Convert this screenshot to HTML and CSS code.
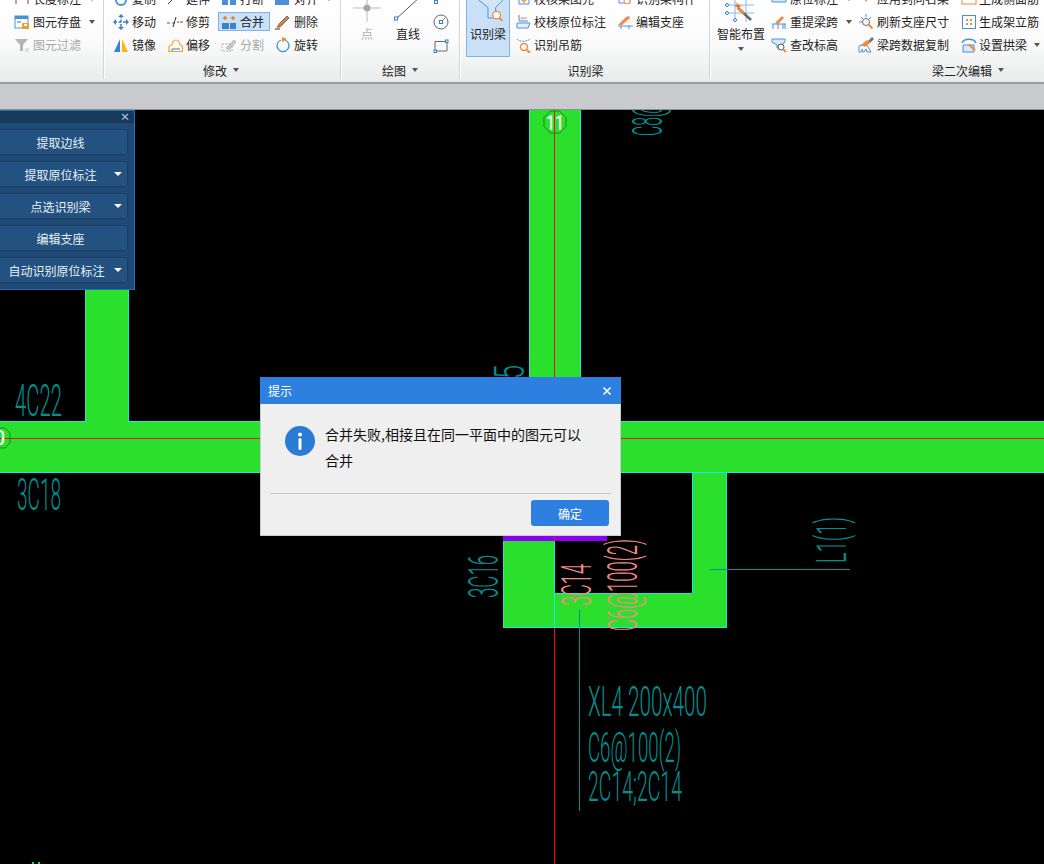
FILE: index.html
```html
<!DOCTYPE html>
<html lang="zh-CN">
<head>
<meta charset="utf-8">
<title>识别梁</title>
<link rel="stylesheet" href="styles.css">
</head>
<body>
<div class="app">
  <header class="ribbon">
    <section class="group g1">
      <div class="body">
        <div class="col">
          <div class="item"><svg class="ic" viewBox="0 0 16 16"><path d="M2 3v10M14 3v10M2 8h12" fill="none" stroke="#555"/></svg><span>长度标注</span><i class="caret"></i></div>
          <div class="item"><svg class="ic" viewBox="0 0 16 16"><rect x="1" y="2" width="13" height="12" fill="#fff" stroke="#4a90d9"/><rect x="1" y="2" width="13" height="3" fill="#4a90d9"/><rect x="3" y="7" width="4" height="2" fill="#8ab8e8"/><rect x="8" y="9" width="7" height="6" fill="#f39a3a"/><rect x="10" y="10" width="3" height="2" fill="#fff"/></svg><span>图元存盘</span><i class="caret"></i></div>
          <div class="item off"><svg class="ic" viewBox="0 0 16 16"><path d="M1 2h13L9 8v6H6V8z" fill="#b5b5b5"/><path d="M11 12h4M11 14h4" stroke="#c8c8c8"/></svg><span>图元过滤</span></div>
        </div>
      </div>
      <footer class="label"></footer>
    </section>

    <section class="group g2">
      <div class="body">
        <div class="col w54">
          <div class="item"><svg class="ic" viewBox="0 0 16 16"><circle cx="8" cy="9" r="5" fill="none" stroke="#4a90d9" stroke-width="2"/></svg><span>复制</span></div>
          <div class="item"><svg class="ic" viewBox="0 0 16 16"><path d="M8 1v14M1 8h14" stroke="#3b82cc" stroke-width="1.5" stroke-dasharray="3 1.500"/><path d="M8 0l3 3H5zM8 16l3-3H5zM0 8l3-3v6zM16 8l-3-3v6z" fill="#3b82cc"/></svg><span>移动</span></div>
          <div class="item"><svg class="ic" viewBox="0 0 16 16"><path d="M7 2v13H1z" fill="#3b82cc"/><path d="M9 2v13h6z" fill="#fdb515"/></svg><span>镜像</span></div>
        </div>
        <div class="col w54">
          <div class="item"><svg class="ic" viewBox="0 0 16 16"><path d="M1 13l9-9" stroke="#444"/></svg><span>延伸</span></div>
          <div class="item"><svg class="ic" viewBox="0 0 16 16"><path d="M0 9h3M5 9h3M10 8h2M13 8h3" stroke="#555"/><path d="M6 13L9 3" stroke="#333"/></svg><span>修剪</span></div>
          <div class="item"><svg class="ic" viewBox="0 0 16 16"><path d="M1 14.500h15M2 14V10c0-1 1-2 3-2 0-3 2-5 4-5s4 2 4 5c2 0 2.500 1 2.500 2v4" fill="none" stroke="#eda52c" stroke-width="1.200"/><path d="M5 14v-2h8" fill="none" stroke="#3b82cc"/></svg><span>偏移</span></div>
        </div>
        <div class="col w54">
          <div class="item"><svg class="ic" viewBox="0 0 16 16"><rect x="1" y="4" width="6" height="10" fill="#4a90d9"/><rect x="9" y="4" width="6" height="10" fill="#4a90d9"/></svg><span>打断</span></div>
          <div class="item on"><svg class="ic" viewBox="0 0 16 16"><rect x="1" y="9" width="7" height="6" fill="#3b82cc"/><rect x="9" y="9" width="6" height="6" fill="#3b82cc"/><path d="M2 4h4M4 2v4M10 4h4M12 2v4" stroke="#e87a1d" stroke-width="1.300"/></svg><span>合并</span></div>
          <div class="item off"><svg class="ic" viewBox="0 0 16 16"><path d="M1 7h10v7H1z" fill="none" stroke="#b0b0b0" stroke-dasharray="2 1"/><path d="M5 11l8-8 2 2-7 8z" fill="#c8c8c8" stroke="#a5a5a5" stroke-width=".6"/></svg><span>分割</span></div>
        </div>
        <div class="col">
          <div class="item"><svg class="ic" viewBox="0 0 16 16"><rect x="0" y="3" width="14" height="11" fill="#4a90d9"/></svg><span>对齐</span><i class="caret"></i></div>
          <div class="item"><svg class="ic" viewBox="0 0 16 16"><path d="M4 10l8-8 2 2-8 8z" fill="#c98a4a" stroke="#444" stroke-width=".7"/><path d="M2 14c0-3 1-4 3-4l1 2c0 1-2 2-4 2z" fill="#e2622a"/><path d="M0 15h5" stroke="#333"/></svg><span>删除</span></div>
          <div class="item"><svg class="ic" viewBox="0 0 16 16"><path d="M6 3a6 6 0 1 0 4 0" fill="none" stroke="#4a90d9" stroke-width="1.300"/><path d="M7 0l5 2-5 3z" fill="#f08a24"/></svg><span>旋转</span></div>
        </div>
      </div>
      <footer class="label">修改<i class="caret"></i></footer>
    </section>

    <section class="group g3">
      <div class="body">
        <div class="large pt">
          <svg class="lg" viewBox="0 0 36 38"><path d="M4 21h28M18 7v28" stroke="#bbb"/><circle cx="18" cy="21" r="3.500" fill="#a8a8a8"/></svg>
          <span class="off-t">点</span>
        </div>
        <div class="large ln">
          <svg class="lg" viewBox="0 0 46 38"><path d="M11 32L35 10" stroke="#555"/><rect x="9.500" y="30" width="3" height="3" fill="#fff" stroke="#2f80d8"/></svg>
          <span>直线</span>
        </div>
        <div class="col">
          <div class="item"><svg class="ic" viewBox="0 0 16 16"><path d="M3 10c1-3 2-6 3-8" stroke="#555" fill="none"/><rect x="1.500" y="9.500" width="3" height="3" fill="#fff" stroke="#2f80d8"/></svg></div>
          <div class="item"><svg class="ic" viewBox="0 0 16 16"><circle cx="8" cy="8" r="7" fill="none" stroke="#666"/><path d="M8 8l4-4" stroke="#888"/><rect x="6.500" y="6.500" width="3" height="3" fill="#fff" stroke="#2f80d8"/></svg></div>
          <div class="item"><svg class="ic" viewBox="0 0 16 16"><path d="M2 4.500h12V14H2z" fill="none" stroke="#666"/><rect x="12.500" y="3" width="2.500" height="2.500" fill="#fff" stroke="#2f80d8"/><rect x="1" y="13" width="2.500" height="2.500" fill="#fff" stroke="#2f80d8"/></svg></div>
        </div>
      </div>
      <footer class="label">绘图<i class="caret"></i></footer>
    </section>

    <section class="group g4">
      <div class="body">
        <div class="large act">
          <svg class="lg" viewBox="0 0 44 38"><path d="M12 12l10 8v11h8V20l8-8" fill="#d3e4f5" stroke="#4a90d9"/><circle cx="31" cy="28" r="4" fill="#fff" stroke="#ee8a3a" stroke-width="1.300"/><path d="M34 31l3 3" stroke="#ee8a3a" stroke-width="2"/></svg>
          <span>识别梁</span>
        </div>
        <div class="col w101">
          <div class="item tight"><svg class="ic" viewBox="0 0 16 16"><path d="M3 3v10h10V8" fill="none" stroke="#4a90d9"/><path d="M5 8l3 3 5-7" fill="none" stroke="#ee8a3a" stroke-width="1.400"/></svg><span>校核梁图元</span></div>
          <div class="item tight"><svg class="ic" viewBox="0 0 16 16"><path d="M3 1v6h9M1 9h13l-2 5H1z" fill="#e7f0fa" stroke="#4a90d9"/><path d="M5 4h6" stroke="#ee8a3a"/></svg><span>校核原位标注</span></div>
          <div class="item tight"><svg class="ic" viewBox="0 0 16 16"><path d="M1 2c1 3 11 3 13 0" fill="none" stroke="#4a90d9" stroke-dasharray="2 1"/><circle cx="8" cy="10" r="3.500" fill="#fff" stroke="#ee8a3a" stroke-width="1.400"/><path d="M11 13l3 3" stroke="#ee8a3a" stroke-width="2"/></svg><span>识别吊筋</span></div>
        </div>
        <div class="col">
          <div class="item"><svg class="ic" viewBox="0 0 16 16"><path d="M2 3h11v9H2z" fill="none" stroke="#4a90d9"/><circle cx="10" cy="10" r="3" fill="#fff" stroke="#ee8a3a"/></svg><span>识别梁构件</span></div>
          <div class="item"><svg class="ic" viewBox="0 0 16 16"><path d="M1 11l8-8 3-1 1 2-8 7z" fill="#f08a4a"/><path d="M1 12h15M4 12v3M12 12v3" stroke="#4a90d9"/></svg><span>编辑支座</span></div>
          <div class="item"></div>
        </div>
      </div>
      <footer class="label lift">识别梁</footer>
    </section>

    <section class="group g5">
      <div class="body">
        <div class="large smart">
          <svg class="lg" viewBox="0 0 50 38"><path d="M10 18h28M10 26h28M19 10v25M30 10v25" stroke="#8ab8ea"/><circle cx="11" cy="18" r="1.500" fill="#fff" stroke="#2f80d8"/><circle cx="11" cy="26" r="1.500" fill="#fff" stroke="#2f80d8"/><circle cx="19" cy="33" r="1.500" fill="#fff" stroke="#2f80d8"/><path d="M22 21l13 12" stroke="#666" stroke-width="2.500"/><path d="M22 21l6 5.500" stroke="#ee8a3a" stroke-width="2.500"/><path d="M20 15l1 3-3 1 3 1 1 3 1-3 3-1-3-1z" fill="#ee6a2a"/></svg>
          <span>智能布置</span>
          <i class="caret solo"></i>
        </div>
        <div class="col w87">
          <div class="item"><svg class="ic" viewBox="0 0 16 16"><path d="M1 6l3-3h11v8H1z" fill="#dbe9f7" stroke="#4a90d9"/></svg><span>原位标注</span><i class="caret"></i></div>
          <div class="item"><svg class="ic" viewBox="0 0 16 16"><path d="M4 9l7-7 2 2-6 6z" fill="#ee8a3a"/><path d="M1 10h14M2 10v5M7 10v5M12 10v5M14 10v5" stroke="#4a90d9"/></svg><span>重提梁跨</span><i class="caret"></i></div>
          <div class="item"><svg class="ic" viewBox="0 0 16 16"><path d="M1 2h13v3l-4 3v3H6V8L1 5z" fill="#dbe9f7" stroke="#4a90d9"/><circle cx="10" cy="10" r="3" fill="#fff" stroke="#555"/><path d="M12 12l3 3" stroke="#ee8a3a" stroke-width="2"/></svg><span>查改标高</span></div>
        </div>
        <div class="col w103">
          <div class="item"><svg class="ic" viewBox="0 0 16 16"><path d="M3 2h10l-5 9z" fill="#ee8a3a"/></svg><span>应用到同名梁</span></div>
          <div class="item"><svg class="ic" viewBox="0 0 16 16"><path d="M8 0v3M1 8h3M3 3l2 2M13 3l-2 2" stroke="#4a90d9"/><circle cx="8" cy="8" r="3.500" fill="#fff" stroke="#667"/><path d="M10.500 10.500l4 4" stroke="#ee8a3a" stroke-width="2"/></svg><span>刷新支座尺寸</span></div>
          <div class="item"><svg class="ic" viewBox="0 0 16 16"><path d="M1 15V9l7-2 2 3 3 5H9l-1-3-2 3H5l-1-3v3z" fill="#fff" stroke="#4a90d9"/><path d="M3 8l6-5 3 3-5 4z" fill="#ee8a3a"/><path d="M10 4l4-4 2 2-4 4z" fill="#777"/></svg><span>梁跨数据复制</span></div>
        </div>
        <div class="col">
          <div class="item tight"><svg class="ic" viewBox="0 0 16 16"><rect x="1" y="3" width="14" height="10" fill="#fff" stroke="#ee8a3a"/><path d="M1 8h14" stroke="#4a90d9"/></svg><span>生成侧面筋</span></div>
          <div class="item tight"><svg class="ic" viewBox="0 0 16 16"><rect x="1.500" y="1.500" width="13" height="13" fill="#fff" stroke="#4a90d9"/><path d="M5 5h2v2H5zM9 5h2v2H9zM5 9h2v2H5zM9 9h2v2H9z" fill="#ee8a3a"/></svg><span>生成架立筋</span></div>
          <div class="item tight"><svg class="ic" viewBox="0 0 16 16"><path d="M1 6c2-5 12-5 14 0" fill="none" stroke="#4a90d9" stroke-width="1.500"/><path d="M2 8h11v7H2z" fill="#dbe9f7" stroke="#4a90d9"/><path d="M7 8l6 6 2-1-6-6z" fill="#ee8a3a"/></svg><span>设置拱梁</span><i class="caret"></i></div>
        </div>
      </div>
      <footer class="label right">梁二次编辑<i class="caret"></i></footer>
    </section>
  </header>

  <div class="band"></div>

  <main class="canvas">
    <svg class="drawing" viewBox="0 110 1044 754">
      <g class="green">
        <rect x="529" y="110" width="52" height="320"/>
        <rect x="0" y="421" width="1044" height="52"/>
        <rect x="86" y="285" width="43" height="140"/>
        <rect x="503" y="541" width="52" height="87"/>
        <rect x="555" y="594" width="172" height="34"/>
        <rect x="693" y="473" width="34" height="130"/>
      </g>
      <rect class="purple" x="503" y="535" width="104" height="6"/>
      <path class="edge" d="M529.500 110V421M580.500 110V421M85.500 285V421M128.500 285V421M0 421.500H86M128 421.500H529M581 421.500H1044M0 472.500H1044M692.500 473V593.500H555M726.500 473V627.500H503.500V541"/>
      <path class="red" d="M554.500 110V864M0 438.500H1044"/>
      <path class="edge" d="M554.500 541V628"/>
      <polygon class="node" points="550.500,111 559.500,111 566,117.500 566,126.500 559.500,133 550.500,133 544,126.500 544,117.500"/>
      <polygon class="node" points="-5,428 5,428 10,433 10,443 5,448 -5,448"/>
      <text class="cad white" x="546" y="130" font-size="21" textLength="18" lengthAdjust="spacingAndGlyphs">11</text>
      <text class="cad white" x="-5" y="445" font-size="20" textLength="10" lengthAdjust="spacingAndGlyphs">0</text>

      <text class="cad teal" x="15" y="416" font-size="44" textLength="47" lengthAdjust="spacingAndGlyphs">4C22</text>
      <text class="cad teal" x="17" y="510" font-size="44" textLength="44" lengthAdjust="spacingAndGlyphs">3C18</text>
      <text class="cad teal" x="588" y="716" font-size="43" textLength="119" lengthAdjust="spacingAndGlyphs">XL4 200x400</text>
      <text class="cad teal" x="588" y="762" font-size="43" textLength="93" lengthAdjust="spacingAndGlyphs">C6@100(2)</text>
      <text class="cad teal" x="588" y="801" font-size="43" textLength="94" lengthAdjust="spacingAndGlyphs">2C14;2C14</text>
      <text class="cad teal" transform="translate(498 598) rotate(-90)" font-size="43" textLength="43" lengthAdjust="spacingAndGlyphs">3C16</text>
      <text class="cad salmon" transform="translate(591 606) rotate(-90)" font-size="43" textLength="42" lengthAdjust="spacingAndGlyphs">3C14</text>
      <text class="cad salmon" transform="translate(637 631) rotate(-90)" font-size="43" textLength="92" lengthAdjust="spacingAndGlyphs">C6@100(2)</text>
      <text class="cad teal" transform="translate(846 563) rotate(-90)" font-size="43" textLength="46" lengthAdjust="spacingAndGlyphs">L1(1)</text>
      <text class="cad teal" transform="translate(662 136) rotate(-90)" font-size="43" textLength="42" lengthAdjust="spacingAndGlyphs">C8@2</text>
      <text class="cad teal" transform="translate(524 379) rotate(-90)" font-size="43" textLength="14" lengthAdjust="spacingAndGlyphs">5</text>
      <path class="lead" d="M579.500 610V811M710 569.500H850"/>
      <path class="mark" d="M32 862h2v2h-2zM38 862h2v2h-2z"/>
    </svg>
  </main>

  <aside class="panel">
    <div class="panel-head"><span class="panel-x">×</span></div>
    <div class="panel-body">
      <button class="pbtn">提取边线</button>
      <button class="pbtn">提取原位标注<i class="tri"></i></button>
      <button class="pbtn">点选识别梁<i class="tri"></i></button>
      <button class="pbtn">编辑支座</button>
      <button class="pbtn shift">自动识别原位标注<i class="tri"></i></button>
    </div>
  </aside>

  <div class="dialog">
    <div class="dlg-title"><span>提示</span><svg class="dlg-x" viewBox="0 0 10 10"><path d="M1.500 1.500l7 7M8.500 1.500l-7 7"/></svg></div>
    <div class="dlg-body">
      <svg class="dlg-icon" viewBox="0 0 30 30"><circle cx="15" cy="15" r="15" fill="#2a7bd4"/><circle cx="15" cy="8.500" r="2" fill="#fff"/><rect x="13.500" y="12" width="3" height="12" rx="1.500" fill="#fff"/></svg>
      <p class="dlg-text">合并失败,相接且在同一平面中的图元可以合并</p>
    </div>
    <div class="dlg-foot"><button class="dlg-ok">确定</button></div>
  </div>
</div>
</body>
</html>
```
FILE: styles.css
```css
* { box-sizing: border-box; }
html, body { margin: 0; padding: 0; }
body {
  width: 1044px;
  height: 864px;
  overflow: hidden;
  background: #000;
  font-family: "Noto Sans CJK SC", "Liberation Sans", sans-serif;
  font-size: 12px;
  color: #222;
}
.app {
  position: relative;
  width: 1044px;
  height: 864px;
  display: flex;
  flex-direction: column;
  overflow: hidden;
}

/* ribbon */
.ribbon {
  flex: 0 0 84px;
  display: flex;
  overflow: hidden;
  background: linear-gradient(#fff 0, #fbfbfb 40px, #e9ecec 82px);
  border-bottom: 2px solid #9a9c9e;
}
.group {
  display: flex;
  flex-direction: column;
  border-right: 1px solid #d4d6d6;
  box-shadow: 1px 0 0 #fff;
  margin-bottom: 3px;
}
.g1 { width: 104px; padding-left: 14px; }
.g2 { width: 237px; padding-left: 9px; }
.g3 { width: 119px; }
.g4 { width: 250px; padding-left: 6px; }
.g5 { flex: 1; padding-left: 6px; border-right: 0; box-shadow: none; }
.body {
  display: flex;
  height: 69px;
  margin-top: -13px;
  flex: none;
}
.col { display: flex; flex-direction: column; }
.w54 { width: 54px; }
.w87 { width: 87px; }
.w101 { width: 101px; margin-left: 6px; }
.w103 { width: 103px; }
.item {
  height: 19px;
  margin: 2px 0;
  display: flex;
  align-items: center;
  gap: 3px;
  white-space: nowrap;
}
.item.tight { gap: 2px; }
.item.on {
  width: 52px;
  margin-left: -3px;
  padding-left: 2px;
  background: #c9e0f7;
  border: 1px solid #7fb2e5;
}
.item.off { color: #a8a8a8; }
.off-t { color: #b0b0b0; }
.ic { width: 16px; height: 16px; flex: none; display: block; }
.caret {
  display: inline-block;
  width: 0;
  height: 0;
  margin-left: 5px;
  border-left: 3.5px solid transparent;
  border-right: 3.5px solid transparent;
  border-top: 4px solid #555;
}
.caret.solo { margin: 4px 0 0; }
.large {
  display: flex;
  flex-direction: column;
  align-items: center;
  flex: none;
  line-height: 18px;
  white-space: nowrap;
}
.lg { display: block; height: 38px; flex: none; }
.pt { width: 36px; margin-left: 8px; }
.pt .lg { width: 36px; }
.ln { width: 46px; }
.ln .lg { width: 46px; }
.g3 .col { margin-left: 2px; }
.act {
  width: 44px;
  height: 70px;
  background: #c9e0f7;
  border: 1px solid #7fb2e5;
}
.act .lg { width: 42px; height: 37px; }
.smart { width: 50px; margin-right: 5px; }
.smart .lg { width: 50px; }
.label {
  flex: 1;
  display: flex;
  align-items: center;
  justify-content: center;
  margin-top: 5px;
  white-space: nowrap;
}
.label.lift { padding-right: 4px; }
.g5 .label { padding-left: 176px; }
.g2 .label { padding-right: 11px; }
.label .caret { margin-left: 6px; }

/* strip below ribbon */
.band {
  flex: 0 0 26px;
  background: #c8cacd;
  border-bottom: 1px solid #8e9092;
}

/* drawing */
.canvas { flex: 1; background: #000; }
.drawing { display: block; width: 1044px; height: 754px; }
.green rect { fill: #2bdf2d; }
.purple { fill: #8a00f0; }
.edge { fill: none; stroke: #18e8e8; stroke-width: 1; }
.red { fill: none; stroke: #f01010; stroke-width: 1; }
.node { fill: none; stroke: #0f8f1a; stroke-width: 1; }
.cad { font-family: Roboto, "Liberation Sans", sans-serif; font-weight: 300; }
.teal { fill: #009090; }
.salmon { fill: #f08a80; }
.cad.white { fill: #fff; font-weight: 500; }
.lead { fill: none; stroke: #009090; stroke-width: 1; }
.mark { fill: #1fe02a; }

/* floating panel */
.panel {
  position: absolute;
  left: -8px;
  top: 110px;
  width: 143px;
  height: 180px;
  background: #1f4a75;
  border: 1px solid #2a6eb0;
}
.panel-head {
  height: 12px;
  background: #17395c;
  display: flex;
  justify-content: flex-end;
  align-items: center;
  padding-right: 4px;
}
.panel-x { color: #b9cbe0; font-size: 10px; line-height: 12px; font-weight: bold; }
.panel-body {
  display: flex;
  flex-direction: column;
  gap: 6px;
  padding: 6px 6px 0 0;
}
.pbtn {
  position: relative;
  height: 26px;
  padding: 0;
  background: #235180;
  border: 1px solid #1b3f64;
  border-radius: 3px;
  color: #e8f0f8;
  font: inherit;
  text-align: center;
}
.pbtn.shift { padding-right: 8px; }
.tri {
  position: absolute;
  right: 5px;
  top: 10px;
  width: 0;
  height: 0;
  border-left: 4px solid transparent;
  border-right: 4px solid transparent;
  border-top: 4px solid #fff;
}

/* dialog */
.dialog {
  position: absolute;
  left: 260px;
  top: 377px;
  width: 361px;
  height: 159px;
  background: #efefef;
  border: 1px solid #c6ccd2;
  border-top: 0;
  display: flex;
  flex-direction: column;
}
.dlg-title {
  height: 27px;
  margin: 0 -1px;
  padding: 0 9px 0 8px;
  background: #2e80e0;
  color: #fff;
  display: flex;
  justify-content: space-between;
  align-items: center;
}
.dlg-x { width: 10px; height: 10px; }
.dlg-x path { stroke: #fff; stroke-width: 1.6; fill: none; }
.dlg-body {
  flex: 1;
  display: flex;
  align-items: flex-start;
  padding: 17px 0 0 15px;
  gap: 10px;
  margin: 0 9px;
  border-bottom: 1px solid #c8c8c8;
}
.dlg-icon { width: 30px; height: 30px; flex: none; margin-top: 5px; }
.dlg-text {
  margin: 0;
  width: 262px;
  font-size: 14px;
  line-height: 26px;
  color: #111;
}
.dlg-foot {
  flex: 0 0 41px;
  display: flex;
  justify-content: flex-end;
  padding: 6px 11px 0 0;
}
.dlg-ok {
  width: 78px;
  height: 26px;
  padding: 0;
  border: 0;
  border-radius: 3px;
  background: #2e80e0;
  color: #fff;
  font: inherit;
}
```
